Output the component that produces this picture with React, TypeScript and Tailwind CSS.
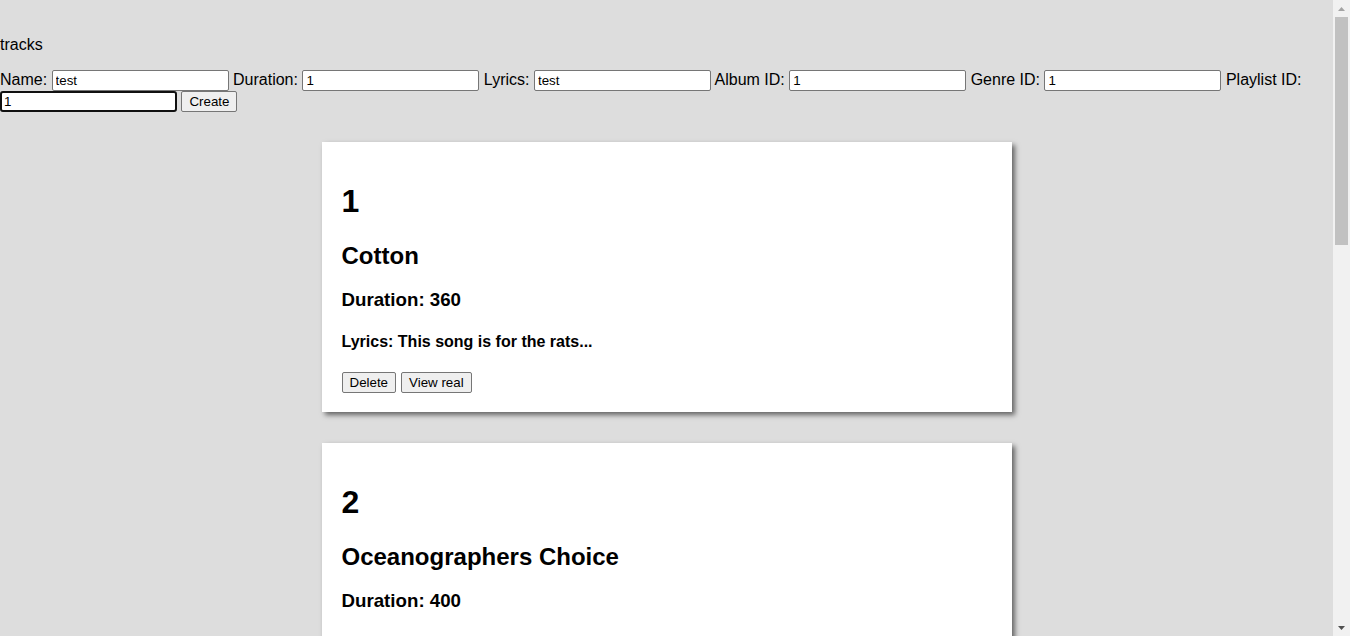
import React from "react";

const tracks = [
  { id: 1, name: "Cotton", duration: 360, lyrics: "This song is for the rats..." },
  { id: 2, name: "Oceanographers Choice", duration: 400, lyrics: "Dive deep into the blue..." },
  { id: 3, name: "Dark Matter", duration: 320, lyrics: "Somewhere out there..." },
];

const inputCls =
  "inline-block w-[177px] h-[21px] border border-[#767676] rounded-[2px] bg-white pl-[3px] pr-[2px] text-[13.33px] text-black align-baseline";
const btnCls =
  "inline-block h-[21px] px-[7px] border border-[#767676] rounded-[2px] bg-[#efefef] text-[13.33px] leading-[17px] text-black align-baseline";

function Card({ t }: { t: (typeof tracks)[number] }) {
  return (
    <div className="w-[690px] bg-white shadow-[3px_3px_5px_rgba(0,0,0,0.55)] px-[20px] pt-[20px] pb-[19px]">
      <h1 className="mt-[21px] text-[32px] font-bold leading-[37px]">{t.id}</h1>
      <h2 className="mt-[22px] text-[24px] font-bold leading-[28px]">{t.name}</h2>
      <h3 className="mt-[19px] text-[18.72px] font-bold leading-[22px]">Duration: {t.duration}</h3>
      <h4 className="mt-[22px] text-[16px] font-bold leading-[18px]">Lyrics: {t.lyrics}</h4>
      <div className="mt-[21px] flex gap-[5px]">
        <button className={btnCls}>Delete</button>
        <button className={btnCls}>View real</button>
      </div>
    </div>
  );
}

function Scrollbar() {
  return (
    <div className="sticky top-0 h-screen w-[17px] shrink-0 bg-[#f1f1f1] flex flex-col items-center">
      <div className="h-[17px] w-full flex items-center justify-center">
        <svg width="7" height="4" viewBox="0 0 7 4">
          <polygon points="3.5,0 7,4 0,4" fill="#a3a3a3" />
        </svg>
      </div>
      <div className="w-[13px] h-[228px] bg-[#c1c1c1]" />
      <div className="flex-1" />
      <div className="h-[17px] w-full flex items-center justify-center">
        <svg width="7" height="4" viewBox="0 0 7 4">
          <polygon points="0,0 7,0 3.5,4" fill="#505050" />
        </svg>
      </div>
    </div>
  );
}

export default function App() {
  return (
    <div className="flex min-h-screen bg-[#dddddd] font-['Liberation_Sans',Arial,sans-serif] text-[16px] text-black">
      <div className="flex-1 min-w-0 pb-[40px]">
        <p className="pt-[36px] leading-[18px]">tracks</p>
        <form className="mt-[16px] leading-[20px]" onSubmit={(e) => e.preventDefault()}>
          Name:{" "}
          <input className={inputCls} defaultValue="test" />{" "}
          Duration:{" "}
          <input className={inputCls} defaultValue="1" />{" "}
          Lyrics:{" "}
          <input className={inputCls} defaultValue="test" />{" "}
          Album ID:{" "}
          <input className={inputCls} defaultValue="1" />{" "}
          Genre ID:{" "}
          <input className={inputCls} defaultValue="1" />{" "}
          Playlist ID:{" "}
          <input
            className="inline-block w-[177px] h-[21px] border-2 border-[#101010] rounded-[3px] bg-white pl-[2px] pr-[2px] text-[13.33px] text-black align-baseline"
            defaultValue="1"
          />{" "}
          <button type="submit" className={btnCls}>
            Create
          </button>
        </form>
        <div className="mt-[30px] flex flex-col items-center gap-[31px]">
          {tracks.map((t) => (
            <Card key={t.id} t={t} />
          ))}
        </div>
      </div>
      <Scrollbar />
    </div>
  );
}
